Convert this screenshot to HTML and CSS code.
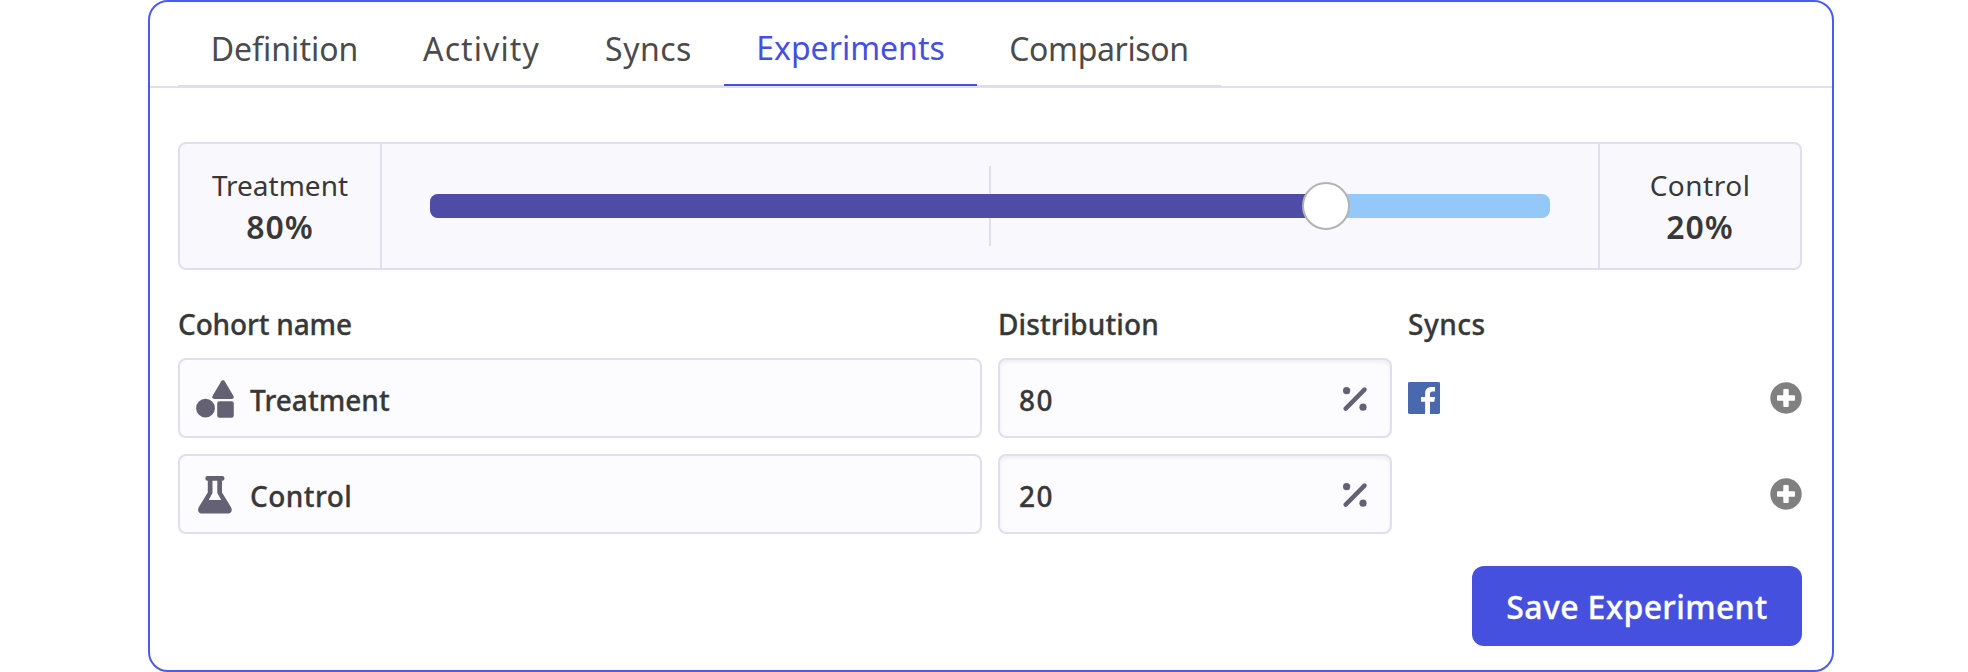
FILE: index.html
```html
<!DOCTYPE html>
<html lang="en">
<head>
<meta charset="utf-8">
<title>Experiments</title>
<link rel="stylesheet" href="styles.css">
</head>
<body>
<svg class="sprite" aria-hidden="true">
  <symbol id="percent" viewBox="0 0 24 24"><circle cx="3.6" cy="3.7" r="3.6"/><circle cx="20" cy="20.2" r="3.6"/><path d="M2.7 21.6 21.5 2.6" fill="none" stroke="currentColor" stroke-width="4.4" stroke-linecap="round"/></symbol>
  <symbol id="plus" viewBox="0 0 32 32"><circle cx="16" cy="16" r="15.7"/><path d="M14.2 7h3.6q.9 0 .9.9v5.4h5.4q.9 0 .9.9v3.6q0 .9-.9.9h-5.4v5.4q0 .9-.9.9h-3.6q-.9 0-.9-.9v-5.400H7.900q-.9 0-.9-.9v-3.600q0-.9.9-.9h5.400V7.900q0-.9.9-.9z" fill="#fff"/></symbol>
</svg>
<main class="card">
  <nav class="tabs">
    <div class="tab-list">
      <a class="tab tab-definition">Definition</a>
      <a class="tab tab-activity">Activity</a>
      <a class="tab tab-syncs">Syncs</a>
      <a class="tab tab-experiments active">Experiments</a>
      <a class="tab tab-comparison">Comparison</a>
    </div>
  </nav>
  <section class="content">
    <div class="split">
      <div class="side"><span class="side-name">Treatment</span><strong class="side-value">80%</strong></div>
      <div class="slider">
        <div class="midpoint"></div>
        <div class="track"><div class="fill" style="width:80%"></div><div class="knob" style="left:80%"></div></div>
      </div>
      <div class="side"><span class="side-name side-control">Control</span><strong class="side-value">20%</strong></div>
    </div>
    <div class="cohorts">
      <div class="heading h-name">Cohort name</div><div class="heading h-dist">Distribution</div><div class="heading h-syncs">Syncs</div>
      <div class="field name">
        <svg class="icon" viewBox="0 0 40 40"><circle cx="11.500" cy="30.200" r="9.400"/><rect x="23.200" y="23.300" width="16.600" height="16.400" rx="2.200"/><path d="M27.100 3.500q1.900-3 3.800 0l8.300 14q1.600 3.200-1.700 3.500H20.500q-3.300-.3-1.700-3.500z"/></svg>
        <span class="field-text t-treatment">Treatment</span>
      </div>
      <div class="field number"><span class="field-text">80</span><svg class="percent"><use href="#percent"/></svg></div>
      <div class="syncs">
        <svg class="facebook" viewBox="0 0 32 32"><rect width="32" height="32" rx="1.400" fill="#4a68ad"/><path d="M17.100 32V19.800H13v-4.800h4.100v-3.500C17.100 7.300 19.600 5 23.400 5H27v4.500h-2.500c-2 0-2.500 1-2.500 2.600V15h5l-.7 4.800H22V32z" fill="#fff"/></svg>
        <svg class="plus"><use href="#plus"/></svg>
      </div>
      <div class="field name">
        <svg class="icon" viewBox="0 0 40 40"><path fill-rule="evenodd" d="M13.500 2h14.800q2.200 0 2.200 2.400t-2.200 2.400H28v11.700l8.600 14c2.600 4.200.5 7.100-3.400 7.100H8.600c-3.900 0-6-2.900-3.400-7.100l8.600-14V6.800h-.3q-2.200 0-2.200-2.400T13.500 2zm5 4.800v12.300L14.700 26h12.500L23.300 19.100V6.800z"/></svg>
        <span class="field-text">Control</span>
      </div>
      <div class="field number"><span class="field-text">20</span><svg class="percent"><use href="#percent"/></svg></div>
      <div class="syncs"><svg class="plus"><use href="#plus"/></svg></div>
    </div>
    <button class="save">Save Experiment</button>
  </section>
</main>
</body>
</html>
```
FILE: styles.css
```css
* { box-sizing: border-box; }
body { margin: 0; background: #fff; color: #383838; font-family: "Noto Sans", sans-serif; }
.sprite { display: block; width: 0; height: 0; }
.card { width: 1686px; height: 672px; margin-left: 148px; border: 2px solid #4d5bea; border-radius: 20px; }
.tabs { height: 86px; padding: 0 28px; border-bottom: 2px solid #e0deef; }
.tab-list { display: flex; width: 1043px; height: 84px; border-bottom: 1px solid #dcdcdc; }
.tab { height: 84px; padding-top: 25px; text-align: center; font-size: 32px; line-height: 44px; color: #4b4b4b; white-space: nowrap; }
.tab-definition { width: 213px; }
.tab-activity { width: 181px; letter-spacing: 1.1px; }
.tab-syncs { width: 152px; padding-left: 1px; letter-spacing: .5px; }
.tab-experiments { width: 253px; }
.tab-comparison { width: 244px; letter-spacing: -.35px; }
.tab.active { padding-top: 24px; color: #4650df; border-bottom: 2px solid #4650df; }
.content { display: flex; flex-direction: column; padding: 54px 30px 24px 28px; }
.split { display: flex; height: 128px; background: #f9f8fd; border: 2px solid #e0deef; border-radius: 8px; }
.side { width: 200px; padding-top: 21px; display: flex; flex-direction: column; align-items: center; }
.side-name { font-size: 28px; line-height: 40px; }
.side-control { letter-spacing: .5px; }
.side-value { font-size: 32px; line-height: 43px; font-weight: 600; letter-spacing: 1px; }
.slider { position: relative; flex: 1; display: flex; align-items: center; padding: 0 48px; border: solid #e0deef; border-width: 0 2px; }
.midpoint { position: absolute; left: 50%; top: 22px; width: 2px; height: 80px; margin-left: -1px; background: #e0deef; }
.track { position: relative; width: 100%; height: 24px; border-radius: 8px; background: #93c8f9; }
.fill { height: 24px; border-radius: 8px 0 0 8px; background: #4f4ca5; }
.knob { position: absolute; top: -12px; width: 48px; height: 48px; margin-left: -24px; border: 2px solid #b3b3b3; border-radius: 50%; background: #fff; }
.cohorts { display: grid; grid-template-columns: 804px 394px 394px; grid-template-rows: 56px 80px 80px; gap: 16px; margin-top: 16px; }
.heading { padding-top: 19px; font-size: 28px; line-height: 38px; font-weight: 500; white-space: nowrap; -webkit-text-stroke: .3px; }
.h-name { letter-spacing: -.15px; }
.h-dist { letter-spacing: .1px; }
.h-syncs { letter-spacing: .5px; }
.field { display: flex; align-items: center; height: 80px; border: 2px solid #e0deef; border-radius: 8px; background: #fcfcfe; font-size: 28px; font-weight: 500; }
.field-text { padding-top: 3px; letter-spacing: .45px; -webkit-text-stroke: .3px; }
.t-treatment { letter-spacing: .05px; }
.name { padding-left: 14px; gap: 16px; }
.icon { width: 40px; height: 40px; fill: #656174; }
.number { justify-content: space-between; padding: 0 23px 0 19px; box-shadow: inset 0 2px 4px rgba(0,0,0,.06); }
.number .field-text { letter-spacing: 1.6px; }
.percent { width: 24px; height: 24px; margin-top: 2px; fill: #656174; color: #656174; }
.syncs { display: flex; align-items: center; }
.facebook { width: 32px; height: 32px; }
.plus { width: 32px; height: 32px; margin-left: auto; fill: #808080; }
.save { align-self: flex-end; width: 330px; height: 80px; margin-top: 32px; padding: 2px 0 0; border: 0; border-radius: 12px; background: #4650df; color: #fff; font: 500 32px/78px "Noto Sans", sans-serif; letter-spacing: .35px; white-space: nowrap; -webkit-text-stroke: .3px; }
```
